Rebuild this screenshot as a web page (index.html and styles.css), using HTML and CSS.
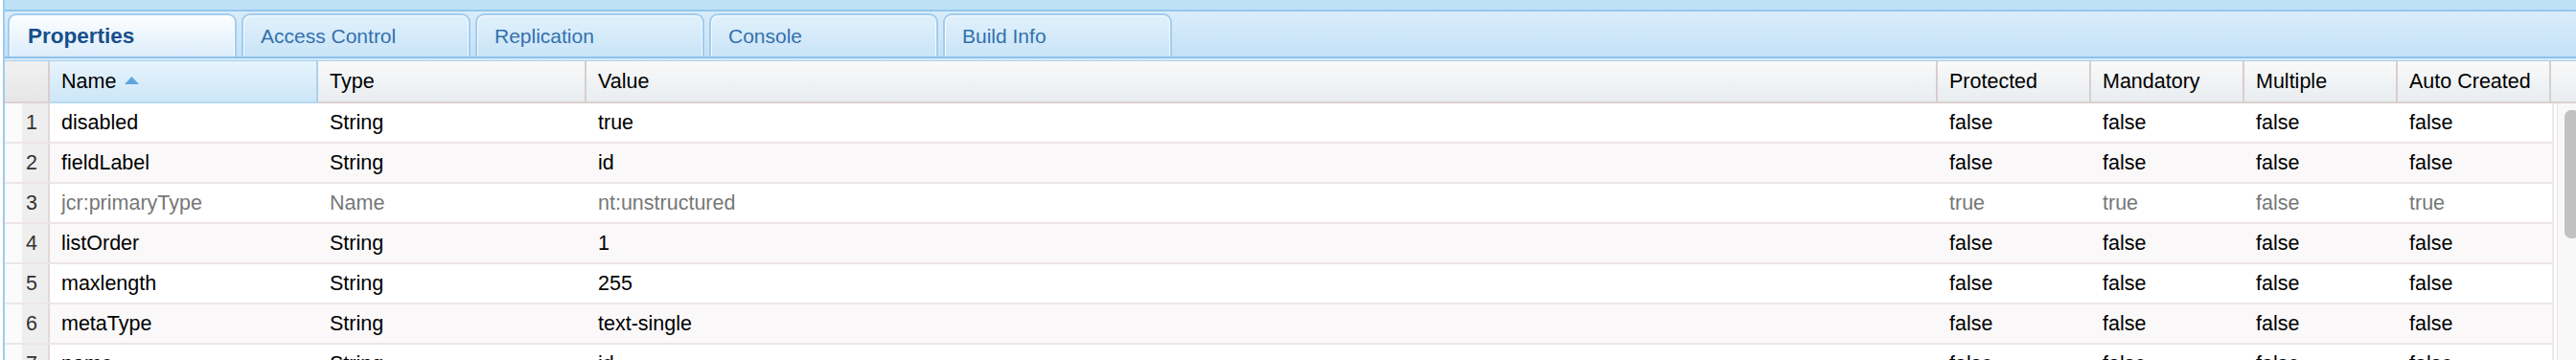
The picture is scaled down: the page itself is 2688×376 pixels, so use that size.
FILE: index.html
```html
<!DOCTYPE html>
<html>
<head>
<meta charset="utf-8">
<link rel="stylesheet" href="styles.css">
</head>
<body>
<div class="frame">
  <div class="topband"></div>
  <div class="tabstrip">
    <div class="tab active">Properties</div>
    <div class="tab">Access Control</div>
    <div class="tab">Replication</div>
    <div class="tab">Console</div>
    <div class="tab">Build Info</div>
  </div>
  <div class="tabbar"></div>
  <div class="header">
    <div class="hcell hnum"></div>
    <div class="hcell sorted">Name<svg class="sort" width="15" height="8" viewBox="0 0 15 8"><polygon points="0,8 7.5,0 15,8" fill="#5ea6de"/></svg></div>
    <div class="hcell">Type</div>
    <div class="hcell">Value</div>
    <div class="hcell">Protected</div>
    <div class="hcell">Mandatory</div>
    <div class="hcell">Multiple</div>
    <div class="hcell">Auto Created</div>
    <div class="hcell hfill"></div>
  </div>
  <div class="gbody">
    <div class="rows">
      <div class="row"><div class="num">1</div><div class="cell">disabled</div><div class="cell">String</div><div class="cell">true</div><div class="cell">false</div><div class="cell">false</div><div class="cell">false</div><div class="cell">false</div></div>
      <div class="row alt"><div class="num">2</div><div class="cell">fieldLabel</div><div class="cell">String</div><div class="cell">id</div><div class="cell">false</div><div class="cell">false</div><div class="cell">false</div><div class="cell">false</div></div>
      <div class="row muted"><div class="num">3</div><div class="cell">jcr:primaryType</div><div class="cell">Name</div><div class="cell">nt:unstructured</div><div class="cell">true</div><div class="cell">true</div><div class="cell">false</div><div class="cell">true</div></div>
      <div class="row alt"><div class="num">4</div><div class="cell">listOrder</div><div class="cell">String</div><div class="cell">1</div><div class="cell">false</div><div class="cell">false</div><div class="cell">false</div><div class="cell">false</div></div>
      <div class="row"><div class="num">5</div><div class="cell">maxlength</div><div class="cell">String</div><div class="cell">255</div><div class="cell">false</div><div class="cell">false</div><div class="cell">false</div><div class="cell">false</div></div>
      <div class="row alt"><div class="num">6</div><div class="cell">metaType</div><div class="cell">String</div><div class="cell">text-single</div><div class="cell">false</div><div class="cell">false</div><div class="cell">false</div><div class="cell">false</div></div>
      <div class="row"><div class="num">7</div><div class="cell">name</div><div class="cell">String</div><div class="cell">id</div><div class="cell">false</div><div class="cell">false</div><div class="cell">false</div><div class="cell">false</div></div>
    </div>
    <div class="vscroll">
      <div class="vtrack"><div class="thumb"></div></div>
    </div>
  </div>
</div>
</body>
</html>
```

FILE: styles.css
```css
* { box-sizing: border-box; }
html, body { margin: 0; padding: 0; }
body {
  width: 2688px;
  height: 376px;
  overflow: hidden;
  background: #ffffff;
  font-family: "Liberation Sans", Arial, Helvetica, sans-serif;
}
.frame {
  margin-left: 3px;
  border-left: 2px solid #9fcbed;
  height: 376px;
  display: flex;
  flex-direction: column;
}
.topband {
  flex: none;
  height: 12px;
  background: #bee1f7;
  border-bottom: 2px solid #95c6ea;
}
.tabstrip {
  flex: none;
  height: 47px;
  padding: 2px 0 0 3px;
  display: flex;
  gap: 5px;
  align-items: flex-end;
  background: linear-gradient(#d9edfb, #c4e1f6);
}
.tab {
  width: 239px;
  height: 45px;
  border: 2px solid #a3cdee;
  border-bottom: none;
  border-radius: 9px 9px 0 0;
  background: linear-gradient(#e1f1fc, #c9e4f7);
  box-shadow: inset 1px 1px 0 rgba(255,255,255,0.75), inset -1px 0 0 rgba(255,255,255,0.75);
  padding-left: 18px;
  display: flex;
  align-items: center;
  font-size: 21px;
  color: #3470ad;
  white-space: nowrap;
}
.tab.active {
  background: linear-gradient(#fdfeff, #dbedfb);
  font-weight: bold;
  color: #174f8b;
  font-size: 22.5px;
  padding-left: 19px;
}
.tabbar {
  flex: none;
  height: 5px;
  background: #d6eafa;
  border-top: 2px solid #90c2e9;
  border-bottom: 1px solid #aad1ef;
}
.header, .row {
  display: grid;
  grid-template-columns: 47px 280px 280px 1410px 160px 160px 160px 1fr;
}
.header {
  flex: none;
  grid-template-columns: 47px 280px 280px 1410px 160px 160px 160px 160px 1fr;
  height: 44px;
}
.hcell {
  display: flex;
  align-items: center;
  padding-left: 12px;
  font-size: 21.5px;
  color: #000;
  background: linear-gradient(#f9f9f9, #e8edf0);
  border-right: 2px solid #dacdcd;
  border-bottom: 2px solid #ddd1d1;
  white-space: nowrap;
}
.hnum {
  background: linear-gradient(#f1f1f1, #e6e6e6);
}
.hcell.sorted {
  background: linear-gradient(#e6f4fd, #cde6f8);
  border-right-color: #a9d2f0;
  border-bottom-color: #b8daf2;
}
.sort { margin-left: 9px; margin-top: -2px; }
.hfill { border-right: none; }
.gbody {
  flex: 1;
  display: flex;
  min-height: 0;
}
.rows {
  flex: 1;
  border-right: 2px solid #efe8e8;
}
.row {
  height: 42px;
  border-bottom: 2px solid #ede5e5;
  background: #ffffff;
  font-size: 21.5px;
  color: #000;
}
.row.alt { background: #faf8f9; }
.row.muted { color: #777777; }
.cell {
  display: flex;
  align-items: center;
  padding-left: 12px;
  white-space: nowrap;
}
.num {
  display: flex;
  align-items: center;
  justify-content: flex-end;
  padding-right: 11px;
  color: #333;
  background: linear-gradient(to right, #fbfbfb 0, #fbfbfb 18px, #eeeeee 18px);
  border-right: 2px solid #e4d8d8;
}
.row.muted .num { color: #333; }
.vscroll {
  flex: none;
  width: 23px;
  padding-left: 3px;
}
.vtrack {
  height: 100%;
  border-left: 1px solid #e2e2e2;
  background: #f8f8f8;
  padding: 7px 0 0 7px;
}
.thumb {
  width: 16px;
  height: 134px;
  border-radius: 7px;
  background: #c1c1c1;
}
```
